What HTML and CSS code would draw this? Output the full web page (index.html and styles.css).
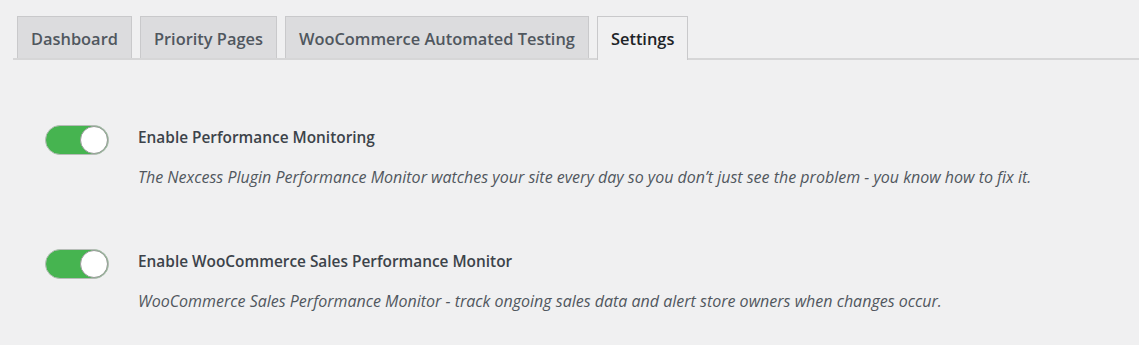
FILE: index.html
```html
<!DOCTYPE html>
<html>
<head>
	<meta charset="utf-8">
	<title>Settings</title>
	<link rel="stylesheet" href="styles.css">
</head>
<body>
<div class="wrap">
	<div class="nav-tabs">
		<a class="nav-tab" href="#">Dashboard</a>
		<a class="nav-tab" href="#">Priority Pages</a>
		<a class="nav-tab" href="#">WooCommerce Automated Testing</a>
		<a class="nav-tab nav-tab-active" href="#">Settings</a>
	</div>

	<div class="settings">
		<div class="setting-row">
			<label class="switch">
				<input type="checkbox" checked>
				<span class="slider"></span>
			</label>
			<div class="setting-text">
				<p class="setting-label">Enable Performance Monitoring</p>
				<p class="setting-desc">The Nexcess Plugin Performance Monitor watches your site every day so you don’t just see the problem - you know how to fix it.</p>
			</div>
		</div>

		<div class="setting-row">
			<label class="switch">
				<input type="checkbox" checked>
				<span class="slider"></span>
			</label>
			<div class="setting-text">
				<p class="setting-label">Enable WooCommerce Sales Performance Monitor</p>
				<p class="setting-desc">WooCommerce Sales Performance Monitor - track ongoing sales data and alert store owners when changes occur.</p>
			</div>
		</div>
	</div>
</div>
</body>
</html>
```

FILE: styles.css
```css
body, p {
	margin: 0
}

a {
	text-decoration: none
}

body {
	background-color: #f0f0f1;
	font-family: "Open Sans", "Noto Sans", sans-serif;
	color: #3c434a;
}

.wrap {
	padding: 16px 0 0 13px;
}

.nav-tabs {
	display: flex;
	gap: 8px;
	padding-left: 4px;
	border-bottom: 2px solid #d6d6d7;
	height: 42px;
}

.nav-tab {
	display: block;
	height: 42px;
	box-sizing: border-box;
	padding: 1px 13px 0;
	line-height: 42px;
	font-size: 16.4px;
	font-weight: 600;
	color: #50575e;
	background-color: #dcdcde;
	border: 1px solid #c9c9cb;
	border-bottom: none;
	white-space: nowrap;
}

.nav-tab-active {
	background-color: #f0f0f1;
	color: #1d2327;
	height: 44px;
}

.settings {
	display: flex;
	flex-direction: column;
	gap: 58px;
	padding: 63px 0 0 32px;
}

.setting-row {
	display: flex;
	gap: 29px;
}

.switch {
	position: relative;
	display: block;
	width: 64px;
	height: 30px;
	margin-top: 2px;
	flex-shrink: 0;
}

.switch input {
	display: none;
}

.slider {
	display: block;
	width: 100%;
	height: 100%;
	box-sizing: border-box;
	border-radius: 15px;
	background-color: #46b450;
	border: 1px solid #b6bcb7;
}

.slider::after {
	content: "";
	position: absolute;
	right: 1px;
	top: 1px;
	width: 28px;
	height: 28px;
	box-sizing: border-box;
	border-radius: 50%;
	background-color: #ffffff;
	border: 1px solid #9a9a9a;
}

.setting-text {
	padding-top: 3px;
}

.setting-label {
	font-size: 15.4px;
	font-weight: 600;
	line-height: 24px;
}

.setting-desc {
	font-size: 16px;
	font-style: italic;
	line-height: 24px;
	margin-top: 15px;
	color: #50575e;
}
```
